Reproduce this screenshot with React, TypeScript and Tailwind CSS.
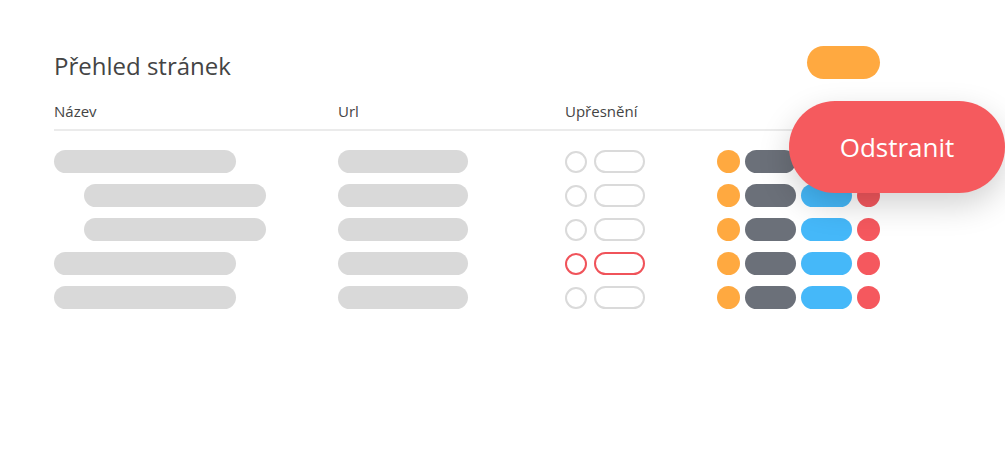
import React from "react";

const rows = [
  { indent: false, warn: false },
  { indent: true, warn: false },
  { indent: true, warn: false },
  { indent: false, warn: true },
  { indent: false, warn: false },
];

const App: React.FC = () => {
  return (
    <div
      className="relative w-[1005px] h-[475px] bg-white overflow-hidden"
      style={{ fontFamily: '"Open Sans", "Noto Sans", sans-serif' }}
    >
      <div className="w-[826px] ml-[54px] pt-[46px]">
        <div className="flex items-center justify-between h-[33px]">
          <h1 className="text-[24px] leading-none font-medium text-[#444] mt-[6px]">Přehled stránek</h1>
          <div className="w-[73px] h-[33px] rounded-full bg-[#ffa940]" />
        </div>

        <div className="grid grid-cols-[284px_227px_152px_1fr] mt-[21px] h-[20px] items-center text-[15px] font-medium text-[#444]">
          <div>Název</div>
          <div>Url</div>
          <div>Upřesnění</div>
          <div />
        </div>
        <div className="h-[2px] bg-[#ebebeb] mt-[9px]" />

        <div className="mt-[19px] flex flex-col gap-[11px]">
          {rows.map((row, i) => (
            <div key={i} className="grid grid-cols-[284px_227px_152px_1fr] h-[23px] items-center">
              <div className={row.indent ? "pl-[30px]" : ""}>
                <div className="w-[182px] h-[23px] rounded-full bg-[#d9d9d9]" />
              </div>
              <div>
                <div className="w-[130px] h-[23px] rounded-full bg-[#d9d9d9]" />
              </div>
              <div className="flex items-center gap-[7px]">
                <div
                  className={`w-[22px] h-[22px] rounded-full border-2 ${
                    row.warn ? "border-[#f0535a]" : "border-[#dadada]"
                  }`}
                />
                <div
                  className={`w-[51px] h-[23px] rounded-full border-2 ${
                    row.warn ? "border-[#f0535a]" : "border-[#dadada]"
                  }`}
                />
              </div>
              <div className="flex items-center gap-[5px]">
                <div className="w-[23px] h-[23px] rounded-full bg-[#ffa940]" />
                <div className="w-[51px] h-[23px] rounded-full bg-[#6b7079]" />
                <div className="w-[51px] h-[23px] rounded-full bg-[#45b8f9]" />
                <div className="w-[23px] h-[23px] rounded-full bg-[#f5585e]" />
              </div>
            </div>
          ))}
        </div>
      </div>

      <button className="absolute left-[789px] top-[101px] w-[216px] h-[92px] rounded-full bg-[#f55a5e] text-white text-[26px] font-medium shadow-[0_12px_32px_rgba(0,0,0,0.18)]">
        Odstranit
      </button>
    </div>
  );
};

export default App;
